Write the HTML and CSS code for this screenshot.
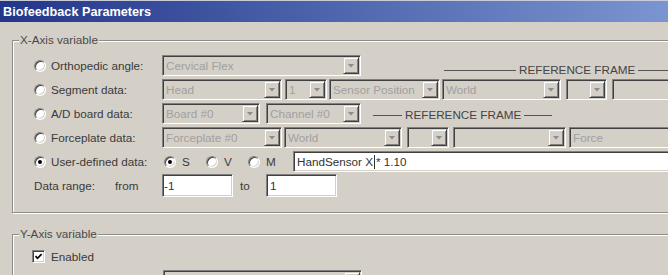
FILE: index.html
```html
<!DOCTYPE html>
<html lang="en">
<head>
  <meta charset="UTF-8">
  <title>Biofeedback Parameters</title>
  <link rel="stylesheet" href="styles.css">
</head>
<body>
  <div class="titlebar">Biofeedback Parameters</div>
  <div class="panel">
    <div class="group">
      <div class="group-title">X-Axis variable</div>
      <div class="group-body">
        <div class="row">
          <label class="lead"><span class="radio"></span>Orthopedic angle:</label>
          <div class="combo c-angle"><span>Cervical Flex</span><i class="drop"></i></div>
          <div class="ref-frame ref-wide"><span class="rule"></span>REFERENCE FRAME<span class="rule"></span></div>
        </div>
        <div class="row">
          <label class="lead"><span class="radio"></span>Segment data:</label>
          <div class="combo c-head"><span>Head</span><i class="drop"></i></div>
          <div class="combo c-num"><span>1</span><i class="drop"></i></div>
          <div class="combo c-sensor"><span>Sensor Position</span><i class="drop"></i></div>
          <div class="combo c-world"><span>World</span><i class="drop"></i></div>
          <div class="combo c-small"><span></span><i class="drop"></i></div>
          <div class="combo c-tail"></div>
        </div>
        <div class="row">
          <label class="lead"><span class="radio"></span>A/D board data:</label>
          <div class="combo c-board"><span>Board #0</span><i class="drop"></i></div>
          <div class="combo c-channel"><span>Channel #0</span><i class="drop"></i></div>
          <div class="ref-frame ref-short"><span class="rule"></span>REFERENCE FRAME<span class="rule"></span></div>
        </div>
        <div class="row">
          <label class="lead"><span class="radio"></span>Forceplate data:</label>
          <div class="combo c-plate"><span>Forceplate #0</span><i class="drop"></i></div>
          <div class="combo c-world2"><span>World</span><i class="drop"></i></div>
          <div class="combo c-small2"><span></span><i class="drop"></i></div>
          <div class="combo c-axis"><span></span><i class="drop"></i></div>
          <div class="combo c-force"><span>Force</span></div>
        </div>
        <div class="row row-user">
          <label class="lead"><span class="radio on"></span>User-defined data:</label>
          <div class="opts">
            <label class="opt"><span class="radio on"></span>S</label>
            <label class="opt"><span class="radio"></span>V</label>
            <label class="opt opt-last"><span class="radio"></span>M</label>
          </div>
          <div class="combo entry">HandSensor X<span class="ibeam"></span>* 1.10</div>
        </div>
        <div class="row row-data">
          <div class="lead"><span>Data range:</span><span class="from">from</span></div>
          <div class="combo entry f-from">-1</div>
          <span class="to">to</span>
          <div class="combo entry f-to">1</div>
        </div>
      </div>
    </div>

    <div class="group group-y">
      <div class="group-title">Y-Axis variable</div>
      <div class="group-body">
        <div class="row row-check">
          <label class="lead"><span class="check"><svg width="11" height="11" viewBox="0 0 11 11"><path d="M2.5 5.2 L4.5 7.3 L8.6 3.1" fill="none" stroke="#000" stroke-width="1.7"/></svg></span>Enabled</label>
        </div>
        <div class="row">
          <div class="lead"></div>
          <div class="combo c-y"><span></span><i class="drop"></i></div>
        </div>
      </div>
    </div>
  </div>
</body>
</html>
```

FILE: styles.css
```css
body {
  margin: 0;
  width: 668px;
  height: 275px;
  overflow: hidden;
  background-color: #d4d0c8;
  font-family: "Liberation Sans", Arial, sans-serif;
  font-size: 11.7px;
  color: #3a3a3a;
}

.titlebar {
  height: 20px;
  padding: 1px 0 0 3px;
  border-top: 1px solid #c9ccd8;
  background: linear-gradient(90deg, #22368a, #7a95d0);
  color: #fff;
  font-size: 12.7px;
  font-weight: bold;
  line-height: 20px;
}

.panel {
  width: 800px;
  padding-top: 18px;
}

.group {
  margin-left: 12px;
  border: 1px solid #8c8c8c;
  box-shadow: inset 1px 1px 0 #fff, 1px 1px 0 #fff;
}

.group-y {
  margin-top: 21px;
}

.group-title {
  display: table;
  margin: -8px 0 0 6px;
  padding: 0 1px;
  line-height: 14px;
  background-color: #d4d0c8;
  color: #4a4a4a;
}

.group-body {
  padding: 8px 0 15px 21px;
}

.row {
  display: flex;
  align-items: center;
  height: 21px;
  margin-bottom: 3px;
}

.row-user {
  margin-bottom: 2px;
}

.row-data {
  height: 23px;
  margin-bottom: 0;
}

.row-check {
  height: 15px;
  margin-bottom: 6px;
}

.lead {
  flex: none;
  width: 128px;
  display: flex;
  align-items: center;
  gap: 5px;
  white-space: nowrap;
}

.from {
  margin-left: 15px;
}

.to {
  flex: none;
  width: 26px;
  margin-left: 7px;
}

/* sunken 3D controls */
.combo {
  flex: none;
  box-sizing: border-box;
  height: 21px;
  display: flex;
  align-items: center;
  padding-left: 3px;
  border: 1px solid;
  border-color: #808080 #fff #fff #808080;
  box-shadow: inset 1px 1px 0 #404040, inset -1px -1px 0 #d4d0c8;
  background-color: #d4d0c8;
  color: #a0a0a0;
  white-space: nowrap;
  overflow: hidden;
}

.drop {
  flex: none;
  box-sizing: border-box;
  width: 16px;
  height: 17px;
  margin: 0 1px 0 auto;
  border: 1px solid;
  border-color: #d4d0c8 #404040 #404040 #d4d0c8;
  box-shadow: inset 1px 1px 0 #fff, inset -1px -1px 0 #808080;
  display: flex;
  align-items: center;
  justify-content: center;
}

.drop::after {
  content: "";
  width: 7px;
  height: 4px;
  background-color: #8c8c8c;
  clip-path: polygon(0 0, 100% 0, 50% 100%);
}

.entry {
  flex: 1;
  background-color: #fff;
  color: #333;
}

.row-data .combo {
  height: 23px;
}

.f-from {
  flex: none;
  width: 71px;
  padding-left: 1px;
}

.f-to {
  flex: none;
  width: 71px;
}

.ibeam {
  display: inline-block;
  width: 1px;
  height: 14px;
  margin: 0 1px;
  background-color: #333;
}

.c-angle { width: 199px; }
.c-head { width: 120px; }
.c-num { width: 42px; margin-left: 3px; }
.c-sensor { width: 111px; margin-left: 2px; }
.c-world { width: 119px; margin-left: 2px; }
.c-small { width: 41px; margin-left: 5px; }
.c-tail { width: 120px; margin-left: 5px; }
.c-board { width: 98px; }
.c-channel { width: 95px; margin-left: 6px; }
.c-plate { width: 120px; }
.c-world2 { width: 118px; margin-left: 2px; }
.c-small2 { width: 42px; margin-left: 5px; }
.c-axis { width: 113px; margin-left: 4px; }
.c-force { width: 120px; margin-left: 3px; }
.c-y { width: 199px; margin-left: 1px; }

.ref-frame {
  display: flex;
  align-items: center;
  gap: 3px;
  align-self: flex-end;
  line-height: 14px;
  color: #444;
  white-space: nowrap;
}

.rule {
  height: 1px;
  background-color: #555;
}

.ref-wide {
  flex: 1;
  margin: 0 0 -1px 83px;
}

.ref-wide .rule:first-child { width: 72px; }
.ref-wide .rule:last-child { flex: 1; }

.ref-short {
  margin: 0 0 2px 12px;
}

.ref-short .rule:first-child { width: 29px; }
.ref-short .rule:last-child { width: 28px; }

.radio {
  flex: none;
  box-sizing: border-box;
  width: 12px;
  height: 12px;
  border-radius: 50%;
  border: 1px solid;
  border-color: #808080 #fff #fff #808080;
  box-shadow: inset 1px 1px 0 #404040, inset -1px -1px 0 #d4d0c8;
  background-color: #fff;
  display: flex;
  align-items: center;
  justify-content: center;
}

.radio.on::after {
  content: "";
  width: 4px;
  height: 4px;
  border-radius: 50%;
  background-color: #000;
}

.opts {
  flex: none;
  display: flex;
  margin-left: 2px;
}

.opt {
  width: 42px;
  display: flex;
  align-items: center;
  gap: 6px;
}

.opt-last {
  width: 45px;
}

.check {
  flex: none;
  box-sizing: border-box;
  width: 13px;
  height: 13px;
  margin-left: -2px;
  margin-right: 1px;
  border: 1px solid;
  border-color: #808080 #fff #fff #808080;
  box-shadow: inset 1px 1px 0 #404040, inset -1px -1px 0 #d4d0c8;
  background-color: #fff;
  display: flex;
}

.check svg {
  display: block;
}
```
